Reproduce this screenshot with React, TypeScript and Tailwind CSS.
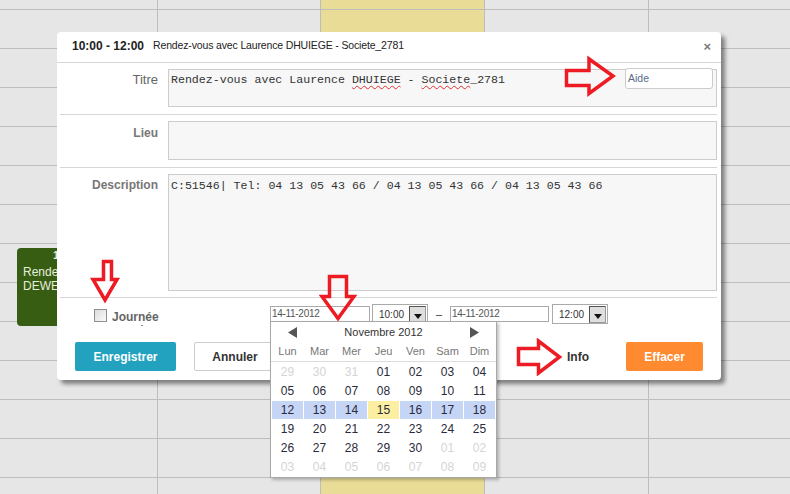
import React from "react";

const COLS = [
  "w-[157px] shrink-0 flex flex-col",
  "w-[163px] shrink-0 flex flex-col border-l border-[#bdbdbd]",
  "w-[164px] shrink-0 flex flex-col border-l border-[#bdbdbd] bg-[#e8dc96]",
  "w-[164px] shrink-0 flex flex-col border-l border-[#bdbdbd]",
  "flex-1 flex flex-col border-l border-[#bdbdbd]",
];

function Grid() {
  return (
    <div className="flex h-full">
      {COLS.map((c, i) => (
        <div key={i} className={c}>
          <div className="h-[9px] shrink-0" />
          {Array.from({ length: 13 }).map((_, j) => (
            <div key={j} className="h-[39px] shrink-0 border-t border-[#bdbdbd]" />
          ))}
        </div>
      ))}
    </div>
  );
}

function DropBtn() {
  return (
    <div className="ml-auto mr-[1px] w-[17px] h-[17px] border border-[#555] border-r-[#999] border-b-[#999] bg-[#dedede] flex items-end justify-center pb-[3px]">
      <svg width="8" height="5" viewBox="0 0 8 5">
        <polygon points="0,0 8,0 4,5" fill="#111" />
      </svg>
    </div>
  );
}

type Cell = { d: string; o?: boolean; h?: boolean; t?: boolean };

const WEEKS: Cell[][] = [
  [{ d: "29", o: true }, { d: "30", o: true }, { d: "31", o: true }, { d: "01" }, { d: "02" }, { d: "03" }, { d: "04" }],
  [{ d: "05" }, { d: "06" }, { d: "07" }, { d: "08" }, { d: "09" }, { d: "10" }, { d: "11" }],
  [{ d: "12", h: true }, { d: "13", h: true }, { d: "14", h: true }, { d: "15", t: true }, { d: "16", h: true }, { d: "17", h: true }, { d: "18", h: true }],
  [{ d: "19" }, { d: "20" }, { d: "21" }, { d: "22" }, { d: "23" }, { d: "24" }, { d: "25" }],
  [{ d: "26" }, { d: "27" }, { d: "28" }, { d: "29" }, { d: "30" }, { d: "01", o: true }, { d: "02", o: true }],
  [{ d: "03", o: true }, { d: "04", o: true }, { d: "05", o: true }, { d: "06", o: true }, { d: "07", o: true }, { d: "08", o: true }, { d: "09", o: true }],
];

function cellClass(c: Cell) {
  if (c.t) return "h-[18px] leading-[18px] text-center text-[12px] bg-[#fcefa2] text-[#2c2a3a]";
  if (c.h) return "h-[18px] leading-[18px] text-center text-[12px] bg-[#c4d5f6] text-[#2c2a3a]";
  if (c.o) return "h-[18px] leading-[18px] text-center text-[12px] text-[#d4d4d4]";
  return "h-[18px] leading-[18px] text-center text-[12px] text-[#2c2a3a]";
}

export default function App() {
  return (
    <div className="relative w-[790px] h-[494px] overflow-hidden bg-[#e6e6e6] font-['Liberation_Sans',Arial,sans-serif]">
      <Grid />

      {/* event in calendar */}
      <div className="absolute left-[17px] top-[248px] w-[138px] h-[78px] rounded-[4px] bg-[#375d12] text-[#e6eede]">
        <div className="text-center text-[11px] font-bold leading-[14px]">10:00 - 12:00</div>
        <div className="pl-[6px] mt-[3px] text-[12px] leading-[14px]">Rendez-vous avec</div>
        <div className="pl-[6px] text-[12px] leading-[14px]">DEWETTER Jean</div>
      </div>

      {/* dialog */}
      <div className="absolute left-[57px] top-[32px] w-[664px] h-[348px] bg-white rounded-[4px] shadow-[4px_4px_4px_rgba(0,0,0,0.45)] text-[#333]">
        <div className="h-[31px] border-b border-[#d6d6d6] flex items-center pl-[15px] pr-[10px] pb-[2px]">
          <span className="text-[12px] font-bold text-[#222]">10:00 - 12:00</span>
          <span className="ml-[9px] text-[10.5px] tracking-[-0.15px] text-[#222]">
            Rendez-vous avec Laurence DHUIEGE - Societe_2781
          </span>
          <span className="ml-auto text-[13px] font-bold text-[#7a7a7a] leading-none">×</span>
        </div>

        <div className="pl-[3px] pr-[4px]">
          <div className="relative flex pt-[6px] pb-[7px] border-b border-[#d6d6d6]">
            <div className="w-[98px] shrink-0 text-right text-[13px] leading-[16px] mt-[3px] text-[#666]">Titre</div>
            <div className="ml-[10px] flex-1 h-[38px] border border-[#ccc] bg-[#f7f7f7] pl-[2px] pt-[3px] font-['Liberation_Mono',monospace] text-[11.6px] leading-[14px] text-[#333] whitespace-pre">
              Rendez-vous avec Laurence{" "}
              <span className="underline decoration-wavy decoration-[#e03030] decoration-1 underline-offset-2">DHUIEGE</span>
              {" - "}
              <span className="underline decoration-wavy decoration-[#e03030] decoration-1 underline-offset-2">Societe</span>
              _2781
            </div>
            <div className="absolute left-[565px] top-[5px] w-[88px] h-[21px] rounded-[3px] border border-[#ccc] bg-white pl-[2px] text-[10.5px] leading-[19px] text-[#5c6b8a]">
              Aide
            </div>
          </div>

          <div className="flex pt-[6px] pb-[7px] border-b border-[#d6d6d6]">
            <div className="w-[98px] shrink-0 text-right text-[12px] font-bold leading-[14px] mt-[5px] text-[#777]">Lieu</div>
            <div className="ml-[10px] flex-1 h-[39px] border border-[#ccc] bg-[#f7f7f7]" />
          </div>

          <div className="flex pt-[6px] pb-[6px] border-b border-[#d6d6d6]">
            <div className="w-[98px] shrink-0 text-right text-[12px] font-bold leading-[14px] mt-[4px] text-[#777]">Description</div>
            <div className="ml-[10px] flex-1 h-[117px] border border-[#ccc] bg-[#f7f7f7] pl-[2px] pt-[4px] font-['Liberation_Mono',monospace] text-[11.6px] leading-[14px] text-[#333] whitespace-pre">
              C:51546| Tel: 04 13 05 43 66 / 04 13 05 43 66 / 04 13 05 43 66
            </div>
          </div>
        </div>

        {/* footer row A */}
        <div className="flex items-center h-[20px] mt-[6px]">
          <div className="w-[213px] shrink-0 flex items-center pl-[37px]">
            <div className="w-[13px] h-[13px] mt-[3px] border border-[#8e8e8e] bg-gradient-to-br from-[#dcdcdc] to-[#fafafa]" />
            <span className="relative ml-[5px] translate-y-[3px] text-[12px] font-bold text-[#666]">
              Journée
              <span className="absolute left-[29px] top-[17px] w-[2px] h-px bg-[#888]" />
            </span>
          </div>
          <div className="w-[100px] h-[16px] border border-[#aaa] bg-white pl-[1px] text-[10px] leading-[14px] tracking-[-0.3px] text-[#555]">
            14-11-2012
          </div>
          <div className="ml-[2px] w-[56px] h-[20px] border border-[#aaa] bg-white flex items-center pl-[6px] text-[10px] text-[#333]">
            10:00
            <DropBtn />
          </div>
          <div className="w-[22px] text-center text-[11px] text-[#333]">–</div>
          <div className="w-[99px] h-[16px] border border-[#aaa] bg-white pl-[1px] text-[10px] leading-[14px] tracking-[-0.3px] text-[#555]">
            14-11-2012
          </div>
          <div className="ml-[3px] w-[56px] h-[20px] border border-[#aaa] bg-white flex items-center pl-[6px] text-[10px] text-[#333]">
            12:00
            <DropBtn />
          </div>
        </div>

        {/* footer row B */}
        <div className="flex items-center mt-[18px] h-[29px]">
          <div className="ml-[18px] w-[101px] h-[29px] rounded-[2px] bg-[#22a2bf] text-white text-[12px] font-bold flex items-center justify-center">
            Enregistrer
          </div>
          <div className="ml-[18px] w-[82px] h-[29px] rounded-[2px] border border-[#ccc] bg-white text-[#333] text-[12px] font-bold flex items-center justify-center">
            Annuler
          </div>
          <div className="ml-[291px] w-[24px] text-[12px] font-bold text-[#333]">Info</div>
          <div className="ml-[35px] w-[77px] h-[29px] rounded-[2px] bg-[#ff8a30] text-white text-[12px] font-bold flex items-center justify-center">
            Effacer
          </div>
        </div>
      </div>

      {/* date picker popup */}
      <div className="absolute left-[270px] top-[321px] w-[227px] h-[157px] bg-white border border-[#a8a8a8] shadow-[2px_2px_3px_rgba(0,0,0,0.25)]">
        <div className="h-[20px] flex items-center px-[17px]">
          <svg width="9" height="11" viewBox="0 0 9 11">
            <polygon points="9,0 9,11 0,5.5" fill="#555" />
          </svg>
          <div className="flex-1 text-center text-[11px] text-[#333]">Novembre 2012</div>
          <svg width="9" height="11" viewBox="0 0 9 11">
            <polygon points="0,0 0,11 9,5.5" fill="#555" />
          </svg>
        </div>
        <div className="h-[20px] grid grid-cols-7 gap-x-px px-[1px] border-b border-[#ddd] items-center text-center text-[11px] text-[#777]">
          <div>Lun</div>
          <div>Mar</div>
          <div>Mer</div>
          <div>Jeu</div>
          <div>Ven</div>
          <div>Sam</div>
          <div>Dim</div>
        </div>
        <div className="grid grid-cols-7 gap-px p-[1px]">
          {WEEKS.flat().map((c, i) => (
            <div key={i} className={cellClass(c)}>
              {c.d}
            </div>
          ))}
        </div>
      </div>

      {/* red annotation arrows */}
      <svg className="absolute left-[564px] top-[55px]" width="52" height="42" viewBox="0 0 52 42">
        <polygon points="2.5,15.5 25,15.5 25,4 49,21 25,38.5 25,30.5 2.5,30.5" fill="none" stroke="#ed1c24" strokeWidth="3.5" />
      </svg>
      <svg className="absolute left-[516px] top-[338px]" width="47" height="38" viewBox="0 0 47 38">
        <polygon points="2.5,10.5 22.5,10.5 22.5,3 43.5,19 22.5,35 22.5,26.5 2.5,26.5" fill="none" stroke="#ed1c24" strokeWidth="3.5" />
      </svg>
      <svg className="absolute left-[90px] top-[259px]" width="31" height="45" viewBox="0 0 31 45">
        <polygon points="13.5,2.5 21.5,2.5 21.5,20.5 27,20.5 15,41 3,20.5 13.5,20.5" fill="none" stroke="#ed1c24" strokeWidth="3.5" />
      </svg>
      <svg className="absolute left-[319px] top-[274px]" width="38" height="48" viewBox="0 0 38 48">
        <polygon points="10.5,2.5 27.5,2.5 27.5,22.5 35,22.5 19,44.5 3,22.5 10.5,22.5" fill="none" stroke="#ed1c24" strokeWidth="3.5" />
      </svg>
    </div>
  );
}
